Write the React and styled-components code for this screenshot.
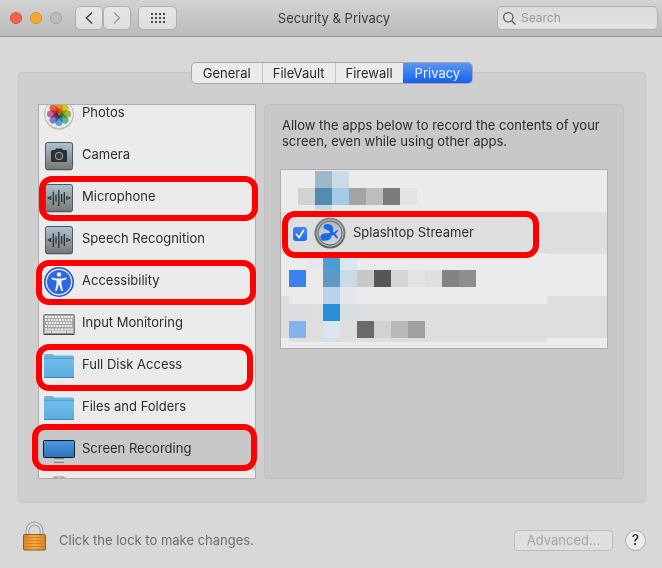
import React from "react";
import styled, { createGlobalStyle } from "styled-components";

const GlobalStyle = createGlobalStyle`
  * { box-sizing: border-box; }
  body {
    margin: 0;
    background: #d8d8d8;
    color: #2c2c2c;
    font-family: Inter, "Liberation Sans", sans-serif;
    font-size: 13px;
    line-height: 16px;
  }
  button, input { font: inherit; color: inherit; margin: 0; }
`;

const Window = styled.div`
  display: flex;
  flex-direction: column;
  min-height: 100vh;
`;

const TitleBar = styled.header`
  display: grid;
  grid-template-columns: 1fr auto 1fr;
  align-items: center;
  height: 37px;
  padding: 0 4px 0 10px;
  background: linear-gradient(#d3d3d3, #bababa);
  border-bottom: 1px solid #969696;
`;

const Title = styled.h1`
  margin: 0;
  font-size: 13px;
  font-weight: 400;
  color: #3a3a3a;
`;

const BarStart = styled.div`
  display: flex;
  align-items: center;
`;

const TrafficLights = styled.div`
  display: flex;
  gap: 8px;
  margin-right: 13px;
`;

const Light = styled.button`
  width: 12px;
  height: 12px;
  padding: 0;
  border: 1px solid ${(p) => p.$edge};
  border-radius: 50%;
  background: ${(p) => p.$fill};
`;

const BarButton = styled.button`
  display: grid;
  place-items: center;
  width: ${(p) => p.$width};
  height: 24px;
  padding: 0;
  margin-right: ${(p) => p.$after || "0"};
  border: 1px solid #b0b0b0;
  border-radius: 5px;
  background: linear-gradient(#e6e6e6, #dedede);
  color: ${(p) => (p.disabled ? "#a0a0a0" : "#484848")};
`;

const SearchBox = styled.label`
  justify-self: end;
  display: flex;
  align-items: center;
  gap: 5px;
  width: 161px;
  height: 24px;
  padding: 0 5px;
  border: 1px solid #b0b0b0;
  border-radius: 5px;
  background: linear-gradient(#dadada, #e3e3e3);
  color: #555;
`;

const SearchInput = styled.input`
  min-width: 0;
  flex: 1;
  padding: 0;
  border: 0;
  outline: 0;
  background: none;
  font-size: 12px;
  &::placeholder { color: #999; opacity: 1; }
`;

const Main = styled.main`
  display: flex;
  flex-direction: column;
  margin: 35px 16px 0 18px;
  padding-bottom: 23px;
  border: 1px solid #c6c6c6;
  border-radius: 4px;
  background: #cfcfcf;
`;

const Tabs = styled.div`
  align-self: center;
  display: flex;
  margin: -11px 0 20px;
  border: 1px solid #a8a8a8;
  border-radius: 5px;
  background: #ebebeb;
`;

const Tab = styled.button`
  height: 20px;
  padding: 0 ${(p) => p.$pad};
  border: 0;
  border-left: ${(p) => (p.$first || p.$active ? "0" : "1px solid #c3c3c3")};
  border-radius: ${(p) => (p.$active ? "0 4px 4px 0" : "0")};
  background: ${(p) => (p.$active ? "linear-gradient(#5a97f1, #1561f0)" : "none")};
  color: ${(p) => (p.$active ? "#e9f0fb" : "#292929")};
`;

const Columns = styled.div`
  display: grid;
  grid-template-columns: 218px 1fr;
  gap: 8px;
  padding: 0 21px 0 19px;
`;

const Frame = styled.div`
  position: relative;
`;

const Categories = styled.ul`
  height: 375px;
  margin: 0;
  padding: 0;
  overflow: hidden;
  list-style: none;
  border: 1px solid #adadad;
  background: #ebebeb;
`;

const CategoryItem = styled.li`
  height: 42px;
  &:first-child { margin-top: -13px; }
`;

const Category = styled.button`
  display: grid;
  grid-template-columns: 32px 1fr;
  align-items: center;
  gap: 7px;
  width: 100%;
  height: 100%;
  padding: 0 4px 2px;
  border: 0;
  text-align: left;
  background: ${(p) => (p.$selected ? "#c8c8c8" : "none")};
  svg { margin-top: 4px; }
`;

const Highlight = styled.span`
  position: absolute;
  top: ${(p) => p.$top};
  left: ${(p) => p.$left};
  width: ${(p) => p.$width};
  height: ${(p) => p.$height || "45px"};
  border: 6px solid #fe0000;
  border-radius: 13px;
  pointer-events: none;
`;

const Detail = styled.section`
  padding: 12px 15px;
  border: 1px solid #c0c0c0;
  border-radius: 4px;
  background: #c8c8c8;
`;

const Hint = styled.p`
  margin: 0 0 20px 2px;
`;

const Apps = styled.ul`
  margin: 0;
  padding: 0 0 10px;
  list-style: none;
  border: 1px solid #adadad;
  background: #ebebeb;
`;

const AppRow = styled.li`
  height: 42px;
  padding: 0 12px;
  &:nth-child(even) { background: #dddfde; }
`;

const AppLabel = styled.label`
  display: flex;
  align-items: center;
  height: 100%;
  svg { flex: none; }
`;

const Tick = styled.span`
  display: grid;
  margin: 2px 7px 0 0;
  > * { grid-area: 1 / 1; }
  svg { pointer-events: none; }
`;

const Checkbox = styled.input`
  appearance: none;
  width: 14px;
  height: 14px;
  border-radius: 3px;
  background: #fafafa;
  &:checked { background: linear-gradient(#4285ee, #246be8); }
`;

const AppName = styled.span`
  margin: 0 0 2px 7px;
`;

const Mosaic = styled.svg`
  position: absolute;
  top: 1px;
  left: 1px;
  pointer-events: none;
`;

const Footer = styled.footer`
  display: flex;
  align-items: center;
  padding: 26px 16px 8px 22px;
`;

const LockButton = styled.button`
  display: flex;
  align-items: center;
  gap: 12px;
  margin-right: auto;
  padding: 0;
  border: 0;
  background: none;
  color: #6d6d6d;
  svg { margin-top: -8px; }
`;

const AdvancedButton = styled.button`
  width: 99px;
  height: 21px;
  padding: 0;
  margin-right: 12px;
  border: 1px solid #bdbdbd;
  border-radius: 4px;
  background: #dfdfdf;
  color: #a5a5a5;
`;

const HelpButton = styled.button`
  width: 21px;
  height: 21px;
  padding: 0;
  border: 1px solid #aaa;
  border-radius: 50%;
  background: #ececec;
  font-size: 14px;
  font-weight: 500;
`;

const Petal = styled.rect`
  mix-blend-mode: multiply;
`;

function PhotosIcon() {
  const petals = ["#f9a31e", "#f0d01c", "#a6cf4f", "#6cc59c", "#6aafe4", "#9587d0", "#d9729f", "#f56a4d"];
  return (
    <svg width="32" height="32" viewBox="0 0 32 32">
      <circle cx="16" cy="17" r="14.5" fill="#aaa" />
      <circle cx="16" cy="16" r="14.5" fill="#e9e9e9" stroke="#bcbcbc" />
      {petals.map((color, i) => (
        <Petal key={color} x="12.5" y="4" width="7" height="11.5" rx="3.5" fill={color} transform={`rotate(${i * 45} 16 16)`} />
      ))}
    </svg>
  );
}

function Plate({ children }) {
  return (
    <svg width="32" height="32" viewBox="0 0 32 32">
      <defs>
        <linearGradient id="plate" x2="0" y2="1">
          <stop stopColor="#adc3cf" />
          <stop offset="1" stopColor="#777875" />
        </linearGradient>
      </defs>
      <rect x="2.5" y="3" width="27" height="27.5" rx="2" fill="#999" />
      <rect x="2.5" y="2.5" width="27" height="27" rx="2" fill="url(#plate)" stroke="#465967" />
      {children}
    </svg>
  );
}

function CameraIcon() {
  return (
    <Plate>
      <path d="M8 11.500q0-1.500 1.500-1.500H12l1-1.500h6l1 1.500h2.500Q24 10 24 11.500v9q0 1.500-1.500 1.500h-13Q8 22 8 20.500z" fill="#2b3034" />
      <circle cx="16" cy="16" r="3.700" fill="#353b3f" stroke="#a0a9ad" />
    </Plate>
  );
}

function WaveIcon() {
  return (
    <Plate>
      <path d="M4 16l2.500-1.500v3zM28 16l-2.500-1.500v3z" fill="#2b3034" />
      <path d="M7.500 14v4M10.300 9.500v13.500M13 12.500v7M15.800 8v16M18.600 12v8M21.300 10v12M24 14v4" fill="none" stroke="#2b3034" strokeWidth="1.300" />
    </Plate>
  );
}

function AccessibilityIcon() {
  return (
    <svg width="32" height="32" viewBox="0 0 32 32">
      <circle cx="16" cy="16" r="15" fill="#2456be" />
      <circle cx="16" cy="16" r="12.700" fill="#2b67df" stroke="#d5e0f6" strokeWidth="1.500" />
      <circle cx="16" cy="8.500" r="2.300" fill="#eee" />
      <path d="M8.500 11.500q7.500 1.800 15 0v1.700l-5 1.500v3l1.500 7.300h-1.700L16.300 19h-.6l-2 6H12l1.500-7.300v-3l-5-1.500z" fill="#eee" />
    </svg>
  );
}

function KeyboardIcon() {
  return (
    <svg width="32" height="32" viewBox="0 0 32 32">
      <rect x="0.500" y="6.500" width="31" height="19.500" rx="1" fill="#a2a2a2" stroke="#858585" />
      <path d="M0.500 26.500h31" stroke="#444" />
      <path d="M2 9h28M2 21.500h28" stroke="#eee" strokeWidth="2" strokeDasharray="2.500 0.700" />
      <path d="M2 12h28M2 18h28" stroke="#eee" strokeWidth="2" strokeDasharray="2 0.800" />
      <path d="M3 15h26" stroke="#eee" strokeWidth="2" strokeDasharray="2 0.800" />
      <path d="M2 24h6M9 24h14M24 24h6" stroke="#eee" strokeWidth="1.500" />
    </svg>
  );
}

function FolderIcon() {
  return (
    <svg width="32" height="32" viewBox="0 0 32 32">
      <defs>
        <linearGradient id="folder" x2="0" y2="1">
          <stop stopColor="#70bde8" />
          <stop offset="1" stopColor="#5aaee0" />
        </linearGradient>
      </defs>
      <path d="M1 6Q1 4 3 4h6q1.500 0 2.200 1.500H29.500q1.500 0 1.500 1.500v19.500h-30z" fill="#68b5e0" />
      <path d="M1 8.500h30V27h-30z" fill="url(#folder)" />
      <path d="M1 8.500h30" stroke="#57a1cb" />
      <path d="M1 27.500h30" stroke="#4287ae" />
    </svg>
  );
}

function DisplayIcon() {
  return (
    <svg width="32" height="32" viewBox="0 0 32 32">
      <defs>
        <linearGradient id="display" x2="0" y2="1">
          <stop stopColor="#4e9ade" />
          <stop offset="1" stopColor="#2c71b9" />
        </linearGradient>
      </defs>
      <path d="M11 24h10v4h-10z" fill="#b5b5b5" />
      <path d="M11 24.500h10M11 28.500h10" stroke="#858585" />
      <path d="M11 26.500h10" stroke="#dadada" />
      <rect x="0.500" y="6.500" width="31" height="17" rx="1" fill="url(#display)" stroke="#111b25" />
    </svg>
  );
}

function GearIcon() {
  return (
    <svg width="32" height="32" viewBox="0 0 32 32">
      <path d="M8 3l4-3 2 1 2-3 2 3 2-1 4 3z" fill="#b5b5b5" />
      <circle cx="16" cy="14" r="13" fill="#ccc" stroke="#a8a8a8" strokeWidth="2" strokeDasharray="5 4" />
    </svg>
  );
}

function SplashtopIcon() {
  return (
    <svg width="32" height="32" viewBox="0 0 32 32">
      <defs>
        <linearGradient id="rim" x2="0" y2="1">
          <stop stopColor="#858989" />
          <stop offset="1" stopColor="#5e6262" />
        </linearGradient>
        <linearGradient id="disc" x2="0" y2="1">
          <stop stopColor="#b0b8bc" />
          <stop offset="1" stopColor="#d1dada" />
        </linearGradient>
      </defs>
      <circle cx="16" cy="16" r="15.500" fill="url(#rim)" />
      <circle cx="16" cy="16" r="13.500" fill="#c7cccc" />
      <circle cx="16" cy="16" r="12" fill="url(#disc)" stroke="#707676" strokeWidth="1.300" />
      <path d="M9.500 9.300C10.500 6 17.500 6.300 18.800 10c.7 2-.3 3.600.5 5l.9.200 2.600-1.900c1-.7 2 .5 1 1.300L21.300 16.700l2.400 3.300c.8 1.300-.8 2-1.600 1L19.300 18c-1.500.1-1.800 1.200-2.200 2.600-.8 3-4.300 3-6.400 3.200C8 24 5.800 21.800 6.500 19.200c.9-3.200 5.600-2.900 9.700-3.200-.2-2-1.700-2.600-3.500-3.300-1.900-.7-3.700-1.300-3.200-3.400z" fill="#1969e8" />
    </svg>
  );
}

function LockIcon() {
  return (
    <svg width="25" height="30" viewBox="0 0 25 30">
      <defs>
        <linearGradient id="brass">
          <stop stopColor="#d9851c" />
          <stop offset="0.500" stopColor="#f3ad43" />
          <stop offset="1" stopColor="#d78521" />
        </linearGradient>
      </defs>
      <path d="M5.500 14V9.500a7 7 0 0 1 14 0V14" fill="none" stroke="#7b8588" strokeWidth="3.500" />
      <path d="M5.500 14V9.500a7 7 0 0 1 14 0V14" fill="none" stroke="#dce5e7" strokeWidth="2" />
      <rect x="1.500" y="13.500" width="22" height="15.500" rx="1" fill="url(#brass)" stroke="#8e5a20" />
      <path d="M2 16.500h21M2 19.500h21M2 22.500h21M2 25.500h21" stroke="#cf8526" />
    </svg>
  );
}

const categories = [
  { name: "Photos", Icon: PhotosIcon },
  { name: "Camera", Icon: CameraIcon },
  { name: "Microphone", Icon: WaveIcon },
  { name: "Speech Recognition", Icon: WaveIcon },
  { name: "Accessibility", Icon: AccessibilityIcon },
  { name: "Input Monitoring", Icon: KeyboardIcon },
  { name: "Full Disk Access", Icon: FolderIcon },
  { name: "Files and Folders", Icon: FolderIcon },
  { name: "Screen Recording", Icon: DisplayIcon, selected: true },
  { name: "", Icon: GearIcon },
];

// Each block: x, y, width, height, colour.
const blocks = [
  [34, 1, 17, 17, "#9db8c9"], [51, 1, 17, 17, "#ccdae5"],
  [17, 18, 17, 17, "#d2d2d2"], [34, 18, 17, 17, "#548bb0"], [51, 18, 17, 17, "#a5cae6"],
  [68, 18, 17, 17, "#a3a3a3"], [85, 18, 17, 17, "#bebebe"], [102, 18, 17, 17, "#7c7c7c"], [119, 18, 17, 17, "#e4e4e4"],
  [34, 35, 17, 5, "#c8d6e6"],
  [8, 83, 258, 51, "#ebebeb"],
  [25, 83, 17, 17, "#e5e7ec"], [42, 83, 17, 17, "#4d9dd5"], [59, 83, 17, 17, "#d9e6ee"],
  [8, 100, 17, 17, "#3c80ef"], [42, 100, 17, 17, "#5f99c5"], [59, 100, 17, 17, "#c8dbe6"],
  [76, 100, 17, 17, "#c8c8c8"], [93, 100, 17, 17, "#565656"], [110, 100, 17, 17, "#d6d6d6"],
  [127, 100, 17, 17, "#e4e4e4"], [144, 100, 17, 17, "#dfdfdf"], [161, 100, 17, 17, "#838383"], [178, 100, 17, 17, "#8e8e8e"],
  [42, 117, 17, 17, "#bcd2e8"], [59, 117, 17, 17, "#e5e7ed"],
  [8, 134, 258, 38, "#dddfde"],
  [8, 134, 17, 17, "#dbdde1"], [42, 134, 17, 17, "#278ed8"], [59, 134, 17, 17, "#d8dee1"],
  [8, 151, 17, 17, "#84b2ec"], [42, 151, 17, 17, "#d8e6f2"],
  [76, 151, 17, 17, "#696b6a"], [93, 151, 17, 17, "#d1d3d2"], [110, 151, 17, 17, "#b8bab9"], [127, 151, 17, 17, "#9fa1a0"],
];

export default function App() {
  return (
    <Window>
      <GlobalStyle />
      <TitleBar>
        <BarStart>
          <TrafficLights>
            <Light aria-label="Close" $fill="#f9614f" $edge="#d94e3f" />
            <Light aria-label="Minimize" $fill="#f3aa2b" $edge="#d3901f" />
            <Light aria-label="Zoom" $fill="#bcbcbc" $edge="#a2a2a2" disabled />
          </TrafficLights>
          <BarButton aria-label="Back" $width="28px">
            <svg width="10" height="14" viewBox="0 0 10 14"><path d="M8 1.500 2.500 7 8 12.500" fill="none" stroke="currentColor" strokeWidth="1.500" /></svg>
          </BarButton>
          <BarButton aria-label="Forward" $width="28px" $after="7px" disabled>
            <svg width="10" height="14" viewBox="0 0 10 14"><path d="M2 1.500 7.500 7 2 12.500" fill="none" stroke="currentColor" strokeWidth="1.500" /></svg>
          </BarButton>
          <BarButton aria-label="Show All" $width="39px">
            <svg width="14" height="10" viewBox="0 0 14 10"><path d="M0 1h14M0 5h14M0 9h14" stroke="currentColor" strokeWidth="2" strokeDasharray="2 2" /></svg>
          </BarButton>
        </BarStart>
        <Title>Security &amp; Privacy</Title>
        <SearchBox>
          <svg width="13" height="13" viewBox="0 0 13 13"><path d="M8.800 8.800 12.500 12.500M10 5.300a4.700 4.700 0 1 1-9.400 0 4.700 4.700 0 0 1 9.400 0z" fill="none" stroke="currentColor" strokeWidth="1.200" /></svg>
          <SearchInput type="search" placeholder="Search" aria-label="Search" />
        </SearchBox>
      </TitleBar>

      <Main>
        <Tabs role="tablist">
          <Tab role="tab" $pad="11px" $first>General</Tab>
          <Tab role="tab" $pad="10px">FileVault</Tab>
          <Tab role="tab" $pad="10px">Firewall</Tab>
          <Tab role="tab" $pad="12px" $active aria-selected="true">Privacy</Tab>
        </Tabs>
        <Columns>
          <Frame>
            <Categories>
              {categories.map(({ name, Icon, selected }) => (
                <CategoryItem key={name}>
                  <Category $selected={selected}>
                    <Icon />
                    {name}
                  </Category>
                </CategoryItem>
              ))}
            </Categories>
            <Highlight $top="72px" $left="1px" $width="219px" />
            <Highlight $top="156px" $left="-2px" $width="220px" />
            <Highlight $top="240px" $left="-2px" $width="217px" $height="47px" />
            <Highlight $top="320px" $left="-6px" $width="225px" $height="47px" />
          </Frame>
          <Detail>
            <Hint>Allow the apps below to record the contents of your screen, even while using other apps.</Hint>
            <Frame>
              <Apps>
                <AppRow />
                <AppRow>
                  <AppLabel>
                    <Tick>
                      <Checkbox type="checkbox" defaultChecked />
                      <svg width="14" height="14" viewBox="0 0 14 14"><path d="m3.500 7.500 2.500 3L10.500 3.500" fill="none" stroke="#f4f4f4" strokeWidth="1.700" strokeLinecap="round" /></svg>
                    </Tick>
                    <SplashtopIcon />
                    <AppName>Splashtop Streamer</AppName>
                  </AppLabel>
                </AppRow>
                <AppRow />
                <AppRow />
              </Apps>
              <Mosaic width="266" height="172" viewBox="0 0 266 172" shapeRendering="crispEdges">
                {blocks.map(([x, y, w, h, fill]) => (
                  <rect key={`${x}-${y}-${w}`} x={x} y={y} width={w} height={h} fill={fill} />
                ))}
              </Mosaic>
              <Highlight $top="42px" $left="2px" $width="257px" $height="47px" />
            </Frame>
          </Detail>
        </Columns>
      </Main>

      <Footer>
        <LockButton>
          <LockIcon />
          Click the lock to make changes.
        </LockButton>
        <AdvancedButton disabled>Advanced...</AdvancedButton>
        <HelpButton aria-label="Help">?</HelpButton>
      </Footer>
    </Window>
  );
}
